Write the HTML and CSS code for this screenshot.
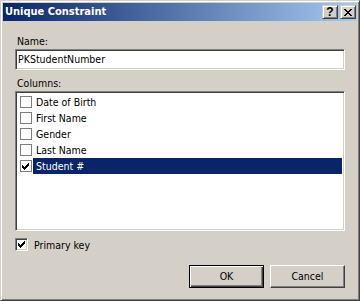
FILE: index.html
```html
<!DOCTYPE html>
<html>
<head>
<meta charset="utf-8">
<link rel="stylesheet" href="styles.css">
</head>
<body>
<div class="window">
  <div class="titlebar">
    <span class="title">Unique Constraint</span>
    <div class="caption-btns">
      <span class="cap-btn help">?</span>
      <span class="cap-btn close">
        <svg width="8" height="7" viewBox="0 0 8 7" shape-rendering="crispEdges"><path d="M0 0h2v1h-2z M6 0h2v1h-2z M1 1h2v1h-2z M5 1h2v1h-2z M2 2h4v1h-4z M3 3h2v1h-2z M2 4h4v1h-4z M1 5h2v1h-2z M5 5h2v1h-2z M0 6h2v1h-2z M6 6h2v1h-2z" fill="#000"/></svg>
      </span>
    </div>
  </div>
  <div class="content">
    <div class="label">Name:</div>
    <div class="textbox">PKStudentNumber</div>
    <div class="label label-cols">Columns:</div>
    <div class="listbox">
      <div class="row"><span class="lcheck"></span><span class="ltext">Date of Birth</span></div>
      <div class="row"><span class="lcheck"></span><span class="ltext">First Name</span></div>
      <div class="row"><span class="lcheck"></span><span class="ltext">Gender</span></div>
      <div class="row"><span class="lcheck"></span><span class="ltext">Last Name</span></div>
      <div class="row selected"><span class="lcheck checked"><svg width="7" height="7" viewBox="0 0 7 7" shape-rendering="crispEdges"><path d="M0 2h1v3h-1z M1 3h1v3h-1z M2 4h1v3h-1z M3 3h1v3h-1z M4 2h1v3h-1z M5 1h1v3h-1z M6 0h1v3h-1z" fill="#000"/></svg></span><span class="ltext">Student #</span></div>
    </div>
    <div class="pk-row">
      <span class="check3d"><svg width="7" height="7" viewBox="0 0 7 7" shape-rendering="crispEdges"><path d="M0 2h1v3h-1z M1 3h1v3h-1z M2 4h1v3h-1z M3 3h1v3h-1z M4 2h1v3h-1z M5 1h1v3h-1z M6 0h1v3h-1z" fill="#000"/></svg></span>
      <span class="pk-text">Primary key</span>
    </div>
    <div class="buttons">
      <div class="btn default"><span>OK</span></div>
      <div class="btn"><span>Cancel</span></div>
    </div>
  </div>
</div>
</body>
</html>
```
FILE: styles.css
```css
html, body {
  margin: 0;
  padding: 0;
  background: #d4d0c8;
}
body {
  font-family: "DejaVu Sans Condensed", "DejaVu Sans", sans-serif;
  font-stretch: condensed;
  font-size: 10.5px;
  color: #000;
}
.window {
  width: 360px;
  height: 301px;
  box-sizing: border-box;
  background: #d4d0c8;
  border: 1px solid;
  border-color: #d4d0c8 #404040 #404040 #d4d0c8;
  box-shadow: inset 1px 1px #fff, inset -1px -1px #808080;
  padding: 2px;
  display: flex;
  flex-direction: column;
}
.titlebar {
  height: 18px;
  display: flex;
  align-items: flex-start;
  justify-content: space-between;
  padding: 0 1px 0 2px;
  background: linear-gradient(to right, #0a246a, #a6caf0);
}
.title {
  color: #fff;
  font-weight: bold;
  font-size: 11px;
  line-height: 18px;
}
.caption-btns {
  display: flex;
  gap: 2px;
  margin-top: 2px;
}
.cap-btn {
  width: 16px;
  height: 14px;
  box-sizing: border-box;
  background: #d4d0c8;
  border: 1px solid;
  border-color: #d4d0c8 #404040 #404040 #d4d0c8;
  box-shadow: inset 1px 1px #fff, inset -1px -1px #808080;
  display: flex;
  align-items: center;
  justify-content: center;
}
.help {
  font-family: "Liberation Sans", Arial, sans-serif;
  font-stretch: normal;
  font-weight: bold;
  font-size: 12px;
  line-height: 12px;
}
.close svg {
  display: block;
}
.content {
  padding: 0 12px;
  display: flex;
  flex-direction: column;
}
.label {
  line-height: 13px;
  height: 13px;
  padding-left: 2px;
  margin-top: 14px;
  margin-bottom: 1px;
}
.label-cols {
  margin-top: 7px;
}
.textbox {
  height: 21px;
  box-sizing: border-box;
  background: #fff;
  border: 1px solid;
  border-color: #808080 #fff #fff #808080;
  box-shadow: inset 1px 1px #404040, inset -1px -1px #d4d0c8;
  padding-left: 2px;
  line-height: 19px;
}
.listbox {
  height: 140px;
  box-sizing: border-box;
  background: #fff;
  border: 1px solid;
  border-color: #808080 #fff #fff #808080;
  box-shadow: inset 1px 1px #404040, inset -1px -1px #d4d0c8;
  padding: 2px 2px;
  display: flex;
  flex-direction: column;
}
.row {
  height: 16px;
  display: flex;
  align-items: flex-start;
}
.lcheck {
  width: 12px;
  height: 12px;
  box-sizing: border-box;
  border: 1px solid #808080;
  background: #fff;
  margin: 2px 1px 0 2px;
  display: flex;
}
.lcheck svg {
  margin: 2px 0 0 1px;
}
.ltext {
  flex: 1;
  line-height: 16px;
  height: 16px;
  padding-left: 3px;
}
.selected .ltext {
  background: #0a246a;
  color: #fff;
}
.pk-row {
  display: flex;
  align-items: flex-start;
  margin-top: 7px;
}
.check3d {
  width: 13px;
  height: 13px;
  box-sizing: border-box;
  background: #fff;
  border: 1px solid;
  border-color: #808080 #fff #fff #808080;
  box-shadow: inset 1px 1px #404040, inset -1px -1px #d4d0c8;
  display: flex;
  padding: 2px 0 0 2px;
}
.pk-text {
  line-height: 15px;
  margin-left: 6px;
}
.buttons {
  display: flex;
  justify-content: flex-end;
  gap: 6px;
  margin-top: 12px;
}
.btn {
  width: 75px;
  height: 23px;
  box-sizing: border-box;
  background: #d4d0c8;
  border: 1px solid;
  border-color: #fff #404040 #404040 #fff;
  box-shadow: inset -1px -1px #808080;
  display: flex;
  align-items: center;
  justify-content: center;
  line-height: 13px;
}
.btn.default {
  border-color: #000;
  box-shadow: inset 1px 1px #fff, inset -1px -1px #404040, inset -2px -2px #808080;
}
```
